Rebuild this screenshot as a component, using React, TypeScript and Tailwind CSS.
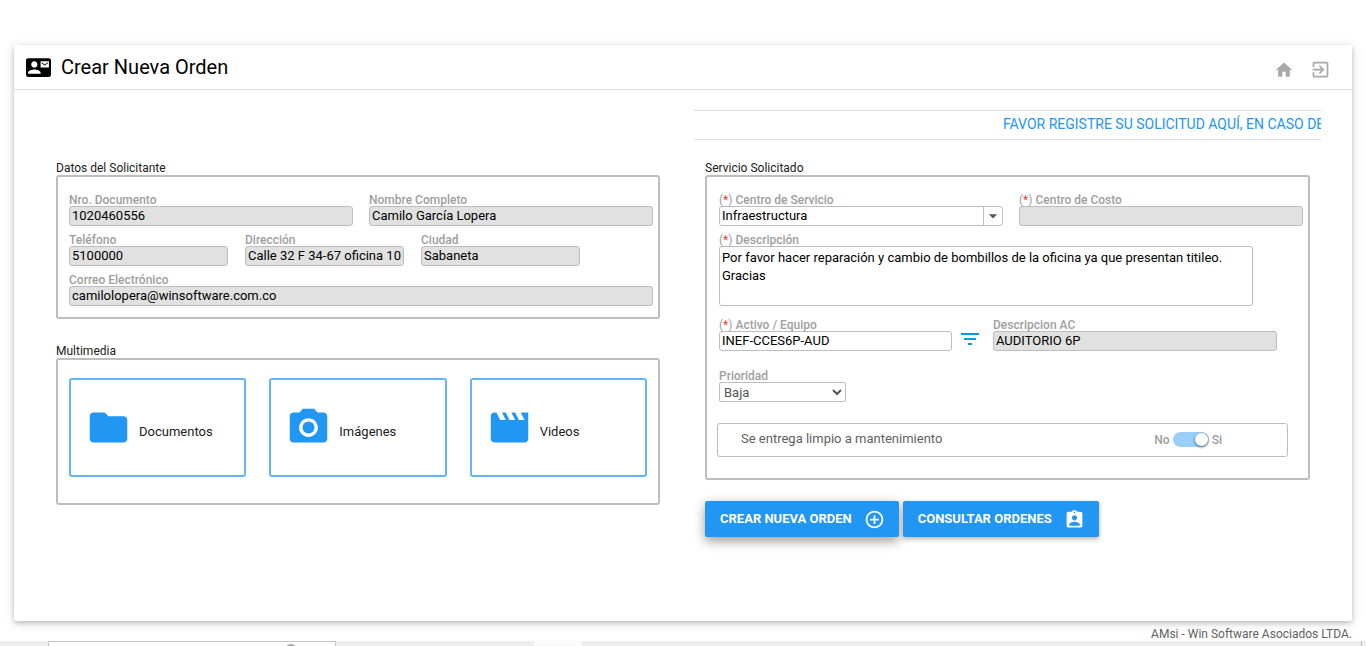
import React, { useState } from 'react';
import clsx from 'clsx';
import {
    MdArrowDropDown,
    MdAssignmentInd,
    MdCameraAlt,
    MdContactMail,
    MdControlPoint,
    MdExitToApp,
    MdFilterList,
    MdFolder,
    MdHome,
    MdMovie,
} from 'react-icons/md';

const controlClass = 'block w-full h-5 px-[2px] pb-[2px] text-[13px] leading-4 text-black border border-[#bdbdbd] rounded-[3px] outline-none';

interface FieldProps {
    id: string;
    label: string;
    required?: boolean;
    className?: string;
    children: React.ReactNode;
}

const Field: React.FC<FieldProps> = ({ id, label, required, className, children }) => (
    <div className={className}>
        <label htmlFor={id} className="block h-[14px] text-xs leading-4 font-medium text-[#9e9e9e] whitespace-nowrap">
            {required && (
                <span className="font-normal">
                    (<span className="text-[#f44336]">*</span>){' '}
                </span>
            )}
            {label}
        </label>
        {children}
    </div>
);

interface ReadOnlyFieldProps {
    id: string;
    label: string;
    value: string;
    required?: boolean;
    className?: string;
}

const ReadOnlyField: React.FC<ReadOnlyFieldProps> = ({ id, label, value, required, className }) => (
    <Field id={id} label={label} required={required} className={className}>
        <input id={id} type="text" readOnly value={value} className={clsx(controlClass, 'bg-[#e1e1e1]')} />
    </Field>
);

interface PanelProps {
    title: string;
    className: string;
    children: React.ReactNode;
}

const Panel: React.FC<PanelProps> = ({ title, className, children }) => (
    <section>
        <h2 className="h-[14px] text-xs leading-[14px] text-[#212121]">{title}</h2>
        <div className={clsx('border-2 border-[#bdbdbd] rounded-[3px]', className)}>{children}</div>
    </section>
);

const mediaItems = [
    { label: 'Documentos', Icon: MdFolder },
    { label: 'Imágenes', Icon: MdCameraAlt },
    { label: 'Videos', Icon: MdMovie },
];

const RequesterPanel: React.FC = () => (
    <Panel title="Datos del Solicitante" className="flex flex-col gap-[6px] pt-[15px] pb-[11px] pl-[11px] pr-[5px]">
        <div className="flex gap-4">
            <ReadOnlyField id="documento" label="Nro. Documento" value="1020460556" className="flex-1" />
            <ReadOnlyField id="nombre" label="Nombre Completo" value="Camilo García Lopera" className="flex-1" />
        </div>
        <div className="flex gap-[17px]">
            <ReadOnlyField id="telefono" label="Teléfono" value="5100000" className="w-[159px]" />
            <ReadOnlyField id="direccion" label="Dirección" value="Calle 32 F 34-67 oficina 10" className="w-[159px]" />
            <ReadOnlyField id="ciudad" label="Ciudad" value="Sabaneta" className="w-[159px]" />
        </div>
        <ReadOnlyField id="correo" label="Correo Electrónico" value="camilolopera@winsoftware.com.co" />
    </Panel>
);

const MediaPanel: React.FC = () => (
    <Panel title="Multimedia" className="grid grid-cols-3 gap-[23px] px-[11px] pt-[18px] pb-[26px]">
        {mediaItems.map(({ label, Icon }) => (
            <button
                key={label}
                type="button"
                className="flex items-center gap-2 h-[99px] pl-[15px] border-2 border-[#64b5f6] rounded-[3px] text-[13px] text-[#212121]"
            >
                <Icon size={45} className="text-[#2196f3] shrink-0" />
                <span className="mt-2">{label}</span>
            </button>
        ))}
    </Panel>
);

const ServicePanel: React.FC = () => {
    const [center, setCenter] = useState('Infraestructura');
    const [description, setDescription] = useState(
        'Por favor hacer reparación y cambio de bombillos de la oficina ya que presentan titileo.\nGracias'
    );
    const [asset, setAsset] = useState('INEF-CCES6P-AUD');
    const [priority, setPriority] = useState('Baja');
    const [clean, setClean] = useState(true);

    return (
        <Panel title="Servicio Solicitado" className="pt-[15px] pb-[21px] pl-3 pr-[5px]">
            <div className="flex gap-4">
                <Field id="centro" label="Centro de Servicio" required className="flex-1">
                    <div className="flex h-5 border border-[#bdbdbd] rounded-[3px]">
                        <input
                            id="centro"
                            type="text"
                            value={center}
                            onChange={(e) => setCenter(e.target.value)}
                            className="flex-1 min-w-0 px-[2px] text-[13px] leading-[18px] text-black outline-none"
                        />
                        <button
                            type="button"
                            aria-label="Abrir lista"
                            className="flex items-center justify-center w-[19px] border-l border-[#bdbdbd] text-[#555]"
                        >
                            <MdArrowDropDown size={20} className="shrink-0" />
                        </button>
                    </div>
                </Field>
                <ReadOnlyField id="costo" label="Centro de Costo" value="" required className="flex-1" />
            </div>

            <Field id="descripcion" label="Descripción" required className="mt-[6px] mr-[50px]">
                <textarea
                    id="descripcion"
                    value={description}
                    onChange={(e) => setDescription(e.target.value)}
                    className="block w-full h-[60px] px-[2px] pt-[2px] text-[13px] leading-[18px] text-black border border-[#bdbdbd] rounded-[3px] outline-none resize-none"
                />
            </Field>

            <div className="flex items-end mt-[11px] mr-[26px]">
                <Field id="activo" label="Activo / Equipo" required className="w-[233px]">
                    <input
                        id="activo"
                        type="text"
                        value={asset}
                        onChange={(e) => setAsset(e.target.value)}
                        className={clsx(controlClass, 'bg-white')}
                    />
                </Field>
                <button type="button" aria-label="Filtrar activos" className="ml-[6px] mr-[11px] text-[#039be5]">
                    <MdFilterList size={24} />
                </button>
                <ReadOnlyField id="descripcion-ac" label="Descripcion AC" value="AUDITORIO 6P" className="flex-1" />
            </div>

            <Field id="prioridad" label="Prioridad" className="w-[127px] mt-[17px]">
                <select
                    id="prioridad"
                    value={priority}
                    onChange={(e) => setPriority(e.target.value)}
                    className="block w-full h-5 text-[13px] text-[#555] bg-white border border-[#bdbdbd] rounded-[2px] outline-none"
                >
                    <option>Baja</option>
                    <option>Media</option>
                    <option>Alta</option>
                </select>
            </Field>

            <div className="flex items-center justify-between h-[34px] mt-[21px] -ml-[2px] mr-[15px] pl-[23px] pr-[65px] border border-[#bdbdbd] rounded-[3px]">
                <span className="text-[13px] leading-[18px] pb-[2px] text-[#616161]">Se entrega limpio a mantenimiento</span>
                <label className="flex items-center gap-[3px] text-xs font-medium text-[#9e9e9e]">
                    No
                    <input
                        type="checkbox"
                        role="switch"
                        aria-label="Se entrega limpio a mantenimiento"
                        checked={clean}
                        onChange={(e) => setClean(e.target.checked)}
                        className="appearance-none flex items-center w-9 h-[15px] mb-[2px] px-px rounded-full bg-[#bdbdbd] checked:bg-[#9acffa] checked:justify-end before:block before:w-[13px] before:h-[13px] before:rounded-full before:bg-white before:shadow-[0_1px_3px_rgba(0,0,0,0.6)]"
                    />
                    Si
                </label>
            </div>
        </Panel>
    );
};

const buttonClass = 'flex items-center h-9 pl-[15px] pr-[14px] gap-3 rounded-[2px] bg-[#2196f3] text-white text-[13px] font-bold whitespace-nowrap uppercase';

export default function App() {
    return (
        <div className="min-h-screen flex flex-col bg-white font-[Roboto,sans-serif] text-black overflow-hidden">
            <main className="flex-1 flex flex-col mx-[14px] mt-[45px] rounded-[2px] bg-white shadow-[0_2px_5px_rgba(0,0,0,0.2),0_2px_12px_rgba(0,0,0,0.12)]">
                <header className="flex items-center h-[45px] pl-3 pr-[21px] border-b border-[#dcdcdc]">
                    <MdContactMail size={25} />
                    <h1 className="ml-[10px] text-xl">Crear Nueva Orden</h1>
                    <nav className="ml-auto mt-[5px] flex items-center gap-4 text-[#a9a9a9]">
                        <a href="#inicio" aria-label="Inicio">
                            <MdHome size={20} />
                        </a>
                        <a href="#salir" aria-label="Salir">
                            <MdExitToApp size={21} />
                        </a>
                    </nav>
                </header>

                <div className="grid grid-cols-[minmax(0,604fr)_minmax(0,605fr)] gap-[45px] px-[42px] pt-5">
                    <div className="flex flex-col gap-[25px] pt-[51px]">
                        <RequesterPanel />
                        <MediaPanel />
                    </div>

                    <div>
                        <div className="h-[30px] -mx-[11px] mb-[21px] pl-[309px] border-y border-[#dcdcdc] overflow-hidden whitespace-nowrap text-sm leading-[26px] text-[#2196f3]">
                            FAVOR REGISTRE SU SOLICITUD AQUÍ, EN CASO DE
                        </div>
                        <ServicePanel />
                        <div className="flex gap-1 mt-[21px]">
                            <button type="button" className={clsx(buttonClass, 'shadow-[0_4px_12px_rgba(0,0,0,0.4)]')}>
                                Crear Nueva Orden
                                <MdControlPoint size={21} />
                            </button>
                            <button type="button" className={clsx(buttonClass, 'shadow-[0_2px_5px_rgba(0,0,0,0.3)]')}>
                                Consultar Ordenes
                                <MdAssignmentInd size={21} />
                            </button>
                        </div>
                    </div>
                </div>
            </main>

            <footer>
                <p className="h-5 mr-[14px] pt-1 text-right text-xs leading-[18px] text-[#616161]">
                    AMsi - Win Software Asociados LTDA.
                </p>
                <div className="flex h-[5px] bg-[#eeeeee]">
                    <div className="flex justify-end w-72 ml-12 pr-[38px] border border-b-0 border-[#c8c8c8] bg-white overflow-hidden">
                        <span className="w-3 h-3 mt-[2px] rounded-full border-2 border-[#a8a2ac]" />
                    </div>
                    <div className="w-12 ml-[198px] bg-[#fafafa]" />
                    <div className="ml-auto mr-1 w-px bg-[#bdbdbd]" />
                </div>
            </footer>
        </div>
    );
}
